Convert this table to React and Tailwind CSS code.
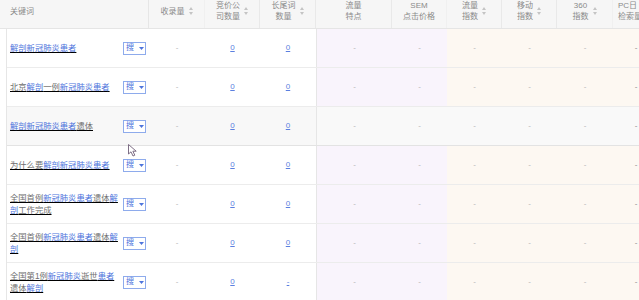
import React from "react";

const FONT = { fontFamily: '"Liberation Sans", "Noto Sans CJK SC", sans-serif' };

function Sort() {
  return (
    <svg width="4" height="8" viewBox="0 0 4 8" className="ml-[4px] shrink-0">
      <path d="M2 0 L4 3 L0 3 Z" fill="#c4c4c4" />
      <path d="M0 5 L4 5 L2 8 Z" fill="#c4c4c4" />
    </svg>
  );
}

function H({ lines, sort, className = "", left = false }) {
  return (
    <div className={`flex h-full border-r border-[#e9e9e9] ${left ? "justify-start pl-[5px]" : "justify-center"} ${className}`}>
      <div className="flex h-[22px] items-center">
        <div className={`flex flex-col text-[8px] leading-[11px] text-[#8a8a8a] ${left ? "items-start" : "items-center"}`}>
          {lines.map((l, i) => (
            <span key={i} className="whitespace-nowrap">{l}</span>
          ))}
        </div>
        {sort && <Sort />}
      </div>
    </div>
  );
}

const rows = [
  { kw: [["解剖新冠肺炎患者", 1]], last: "0" },
  { kw: [["北京", 0], ["解剖", 1], ["一例", 0], ["新冠肺炎患者", 1]], last: "0" },
  { kw: [["解剖新冠肺炎患者", 1], ["遗体", 0]], last: "0", hover: true },
  { kw: [["为什么要", 0], ["解剖新冠肺炎患者", 1]], last: "0" },
  { kw: [["全国首例", 0], ["新冠肺炎患者", 1], ["遗体", 0], ["解剖", 1], ["工作完成", 0]], last: "0" },
  { kw: [["全国首例", 0], ["新冠肺炎患者", 1], ["遗体", 0], ["解剖", 1]], last: "0" },
  { kw: [["全国第1例", 0], ["新冠肺炎", 1], ["逝世", 0], ["患者", 1], ["遗体", 0], ["解剖", 1]], last: "-" },
];

function Dash({ dark = false }) {
  return <span className={`text-[8px] leading-[10px] ${dark ? "text-[#8a8a8a]" : "text-[#b5b5b5]"}`}>-</span>;
}

function LinkNum({ v }) {
  return <span className="text-[8px] leading-[10px] text-[#5b7fe0] underline">{v}</span>;
}

function Row({ r }) {
  const purple = r.hover ? "bg-[#f9f9f9]" : "bg-[#f9f4fc]";
  const orange = r.hover ? "bg-[#f9f9f9]" : "bg-[#fdf8f2]";
  const base = r.hover ? "bg-[#f8f8f8]" : "bg-white";
  return (
    <div className={`grid h-[39px] grid-cols-[142px_56px_55px_56px_76px_55px_55px_55px_56px_46px] border-b ${r.hover ? "border-[#e3e3e3]" : "border-[#ececec]"}`}>
      <div className={`flex items-center pl-[3px] ${base}`}>
        <div className="w-[110px] text-[8.3px] leading-[12px] underline">
          {r.kw.map(([t, b], i) => (
            <span key={i} className={b ? "text-[#4d74dc]" : "text-[#6e6e6e]"}>{t}</span>
          ))}
        </div>
        <div className="ml-[3px] flex h-[13px] w-[23px] items-center border border-[#8eabec] bg-white pl-[2px]">
          <span className="text-[8px] leading-[10px] text-[#4d74dc]">搜</span>
          <svg width="5" height="3" viewBox="0 0 5 3" className="ml-[5px]">
            <path d="M0 0 L5 0 L2.5 3 Z" fill="#4d74dc" />
          </svg>
        </div>
      </div>
      <div className={`flex items-center justify-center ${base}`}><Dash /></div>
      <div className={`flex items-center justify-center ${base}`}><LinkNum v="0" /></div>
      <div className={`flex items-center justify-center ${base}`}><LinkNum v={r.last} /></div>
      <div className={`flex items-center justify-center border-l border-[#e6e6e6] ${purple}`}><Dash /></div>
      <div className={`flex items-center justify-center ${purple}`}><Dash /></div>
      <div className={`flex items-center justify-center ${orange}`}><Dash /></div>
      <div className={`flex items-center justify-center ${orange}`}><Dash /></div>
      <div className={`flex items-center justify-center ${orange}`}><Dash /></div>
      <div className={`flex items-center justify-center ${orange}`}><Dash dark /></div>
    </div>
  );
}

export default function App() {
  return (
    <div className="relative h-[300px] w-[639px] overflow-hidden bg-white" style={FONT}>
      <div className="w-[661px]">
        <div className="grid h-[29px] grid-cols-[149px_56px_55px_56px_76px_55px_55px_55px_56px_46px] border-b border-[#e5e5e5] bg-[#f6f6f6]">
          <div className="flex h-full border-r border-[#e6e6e6] pl-[10px]">
            <div className="flex h-[22px] items-center text-[8px] leading-[11px] text-[#8a8a8a]">关键词</div>
          </div>
          <H lines={["收录量"]} sort className="border-[#f0f0f0]" />
          <H lines={["竞价公", "司数量"]} sort />
          <H lines={["长尾词", "数量"]} sort />
          <H lines={["流量", "特点"]} />
          <H lines={["SEM", "点击价格"]} className="border-[#f0f0f0]" />
          <H lines={["流量", "指数"]} sort />
          <H lines={["移动", "指数"]} sort />
          <H lines={["360", "指数"]} sort className="border-[#f0f0f0]" />
          <H lines={["PC日", "检索量"]} sort left />
        </div>
        <div className="ml-[6px] border-l border-[#e6e6e6]">
          {rows.map((r, i) => (
            <Row key={i} r={r} />
          ))}
        </div>
      </div>
      <svg
        className="absolute left-[128px] top-[144px]"
        width="11"
        height="13"
        viewBox="0 0 11 13"
      >
        <path
          d="M0.5 0.5 L0.5 10 L3 7.8 L5 12 L6.8 11.2 L4.9 7.2 L8.2 7.2 Z"
          fill="#ffffff"
          stroke="#6f5f78"
          strokeWidth="0.9"
          strokeLinejoin="round"
        />
      </svg>
    </div>
  );
}
